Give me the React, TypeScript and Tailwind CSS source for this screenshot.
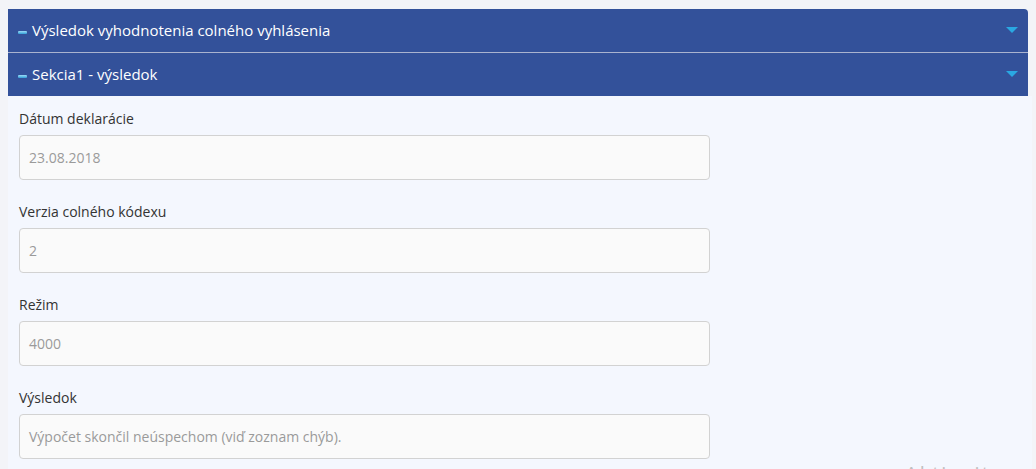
import { ReactNode } from 'react';

const fields = [
  { label: 'Dátum deklarácie', value: '23.08.2018' },
  { label: 'Verzia colného kódexu', value: '2' },
  { label: 'Režim', value: '4000' },
  { label: 'Výsledok', value: 'Výpočet skončil neúspechom (viď zoznam chýb).' },
];

function Dash() {
  return (
    <span className="inline-block w-[9px] h-[3px] rounded-[1px] bg-gradient-to-b from-[#9bdcf7] to-[#2a9fd8] mr-[5px] mt-[3px]" />
  );
}

function Caret() {
  return (
    <svg width="12" height="7" viewBox="0 0 12 7" className="mr-[10px]">
      <polygon points="0,0 12,0 6,6" fill="#2aa8e2" />
    </svg>
  );
}

function Header({ children, border }: { children: ReactNode; border?: boolean }) {
  return (
    <div
      className={`flex items-center justify-between pl-[10px] bg-[#33519a] text-white text-[15px] ${
        border ? 'border-b border-[#aab3cf] h-[44px]' : 'h-[43px]'
      }`}
    >
      <div className="flex items-center">
        <Dash />
        <span>{children}</span>
      </div>
      <Caret />
    </div>
  );
}

export default function App() {
  return (
    <div
      className="relative w-[1036px] h-[469px] overflow-hidden bg-[#f3f4f8] pt-[9px]"
      style={{ fontFamily: '"Open Sans", "Noto Sans", sans-serif' }}
    >
      <div className="ml-[8px] w-[1020px]">
        <div className="rounded-tr-[4px] overflow-hidden">
          <Header border>Výsledok vyhodnotenia colného vyhlásenia</Header>
        </div>
        <Header>Sekcia1 - výsledok</Header>
      </div>
      <div className="ml-[8px] w-[1024px] h-[400px] bg-[#f4f7fe] pl-[11px] pt-[13px]">
        {fields.map((f) => (
          <div key={f.label} className="mb-[22px]">
            <div className="text-[14px] leading-[20px] text-[#333] mb-[6px]">{f.label}</div>
            <div className="w-[691px] h-[45px] flex items-center px-[9px] bg-[#fafafa] border border-[#d2d2d2] rounded-[4px] text-[14px] text-[#9a9a9a]">
              {f.value}
            </div>
          </div>
        ))}
      </div>
      <div className="absolute left-[905px] top-[459px] text-[20px] text-[#c0c0c0] whitespace-nowrap tracking-[2px]">
        Aktivujte systém Windows
      </div>
    </div>
  );
}
